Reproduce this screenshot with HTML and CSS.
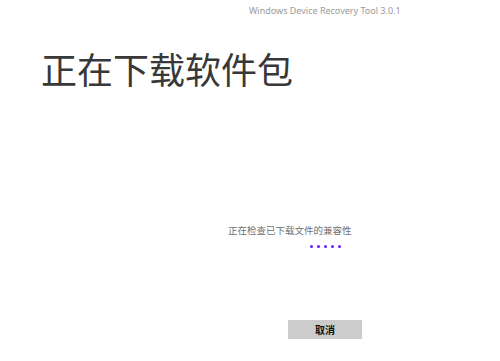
FILE: index.html
```html
<!DOCTYPE html>
<html lang="zh-CN">
<head>
    <meta charset="UTF-8">
    <title>Windows Device Recovery Tool</title>
    <link rel="stylesheet" href="styles.css">
</head>
<body>

    <!-- Window title -->
    <div class="titlebar">Windows Device Recovery Tool 3.0.1</div>

    <!-- Main content -->
    <div class="page">
        <h1 class="heading">正在下载软件包</h1>

        <div class="progress">
            <p class="status">正在检查已下载文件的兼容性</p>
            <div class="dots">
                <span class="dot"></span>
                <span class="dot"></span>
                <span class="dot"></span>
                <span class="dot"></span>
                <span class="dot"></span>
            </div>
        </div>
    </div>

    <!-- Bottom buttons -->
    <div class="footer">
        <button class="cancel">取消</button>
    </div>

</body>
</html>
```

FILE: styles.css
```css
body {
    font-family: "Noto Sans", "Noto Sans CJK SC", sans-serif;
    background-color: #fff;
    color: #333;
    margin: 0;
    width: 500px;
    height: 361px;
    display: flex;
    flex-direction: column;
    overflow: hidden;
}

/* Title bar */
.titlebar {
    height: 22px;
    line-height: 22px;
    padding-left: 249px;
    font-size: 9px;
    color: #9a9a9a;
}

.page {
    flex: 1;
    display: flex;
    flex-direction: column;
}

.heading {
    margin: 27px 0 0 41px;
    font-size: 36px;
    font-weight: normal;
    line-height: 44px;
    color: #383838;
}

/* Progress area */
.progress {
    margin-top: 131px;
    padding-left: 228px;
}

.status {
    margin: 0;
    font-size: 9.5px;
    line-height: 14px;
    color: #707070;
}

.dots {
    display: flex;
    gap: 4px;
    margin: 7px 0 0 82px;
}

.dot {
    width: 3px;
    height: 3px;
    border-radius: 50%;
    background-color: #6a1bff;
}

/* Footer */
.footer {
    display: flex;
    padding: 0 0 22px 288px;
}

.cancel {
    width: 74px;
    height: 19px;
    padding: 0;
    border: none;
    background-color: #cccccc;
    font-family: "Noto Sans CJK SC", sans-serif;
    font-size: 10px;
    font-weight: bold;
    color: #111;
}
```
